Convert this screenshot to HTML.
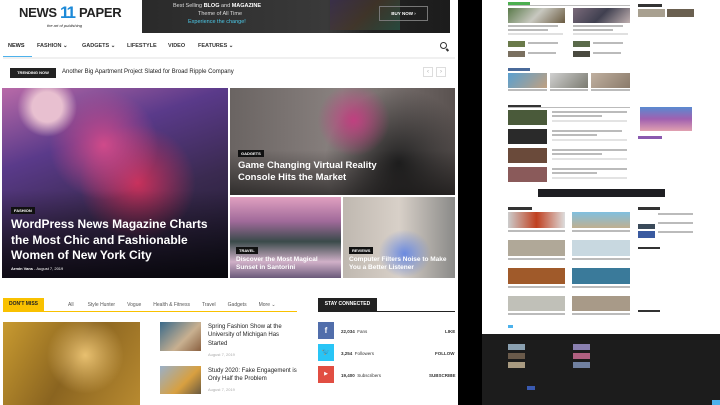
<!DOCTYPE html>
<html><head><meta charset="utf-8"><style>
*{margin:0;padding:0;box-sizing:border-box}
body{width:720px;height:405px;overflow:hidden;background:#000;font-family:"Liberation Sans",sans-serif;position:relative}
.a{position:absolute}
.t{color:#222;white-space:nowrap}
.tag{position:absolute;background:#222;color:#fff;font-size:4px;font-weight:bold;padding:1px 3px}
.ht{position:absolute;color:#fff;font-weight:bold;line-height:1.3}
.g{position:absolute;background:#ccc}
.l{position:absolute;height:2px;background:#bbb}
</style></head><body>
<div class="a" style="left:0;top:0;width:458px;height:405px;background:#fff"></div>
<!-- logo -->
<div class="a t" style="left:19px;top:5px;font-size:13px;font-weight:900;letter-spacing:-0.3px">NEWS</div>
<div class="a" style="left:60px;top:3px;font-size:17px;font-weight:900;color:#1d8ad8;letter-spacing:-2px">11</div>
<div class="a t" style="left:79px;top:5px;font-size:13px;font-weight:900;letter-spacing:-0.3px">PAPER</div>
<div class="a t" style="left:47px;top:23px;font-size:4px;font-style:italic">the art of publishing</div>
<!-- banner -->
<div class="a" style="left:142px;top:0;width:308px;height:33px;background:linear-gradient(90deg,#2a2a2a,#3a3a3a 60%,#222 75%,#1c1c1c)"></div>
<div class="a" style="left:330px;top:0;width:70px;height:30px;background:linear-gradient(135deg,#3a2c50,#4a3a2a 50%,#2a5a4a);opacity:.7"></div>
<div class="a" style="left:173px;top:3px;font-size:5.5px;color:#ddd">Best Selling <b style="color:#fff">BLOG</b> and <b style="color:#fff">MAGAZINE</b></div>
<div class="a" style="left:198px;top:11px;font-size:5.5px;color:#ddd">Theme of All Time</div>
<div class="a" style="left:188px;top:19px;font-size:5.5px;color:#4cc9e8">Experience the change!</div>
<div class="a" style="left:379px;top:6px;width:49px;height:15px;border:1px solid #777;color:#fff;font-size:4.5px;font-weight:bold;text-align:center;line-height:13px">BUY NOW ›</div>
<!-- nav -->
<div class="a t" style="left:8px;top:43px;font-size:5.5px;font-weight:bold;word-spacing:0">NEWS</div>
<div class="a t" style="left:37px;top:43px;font-size:5.5px;font-weight:bold;color:#333">FASHION ⌄</div>
<div class="a t" style="left:82px;top:43px;font-size:5.5px;font-weight:bold;color:#333">GADGETS ⌄</div>
<div class="a t" style="left:127px;top:43px;font-size:5.5px;font-weight:bold;color:#333">LIFESTYLE</div>
<div class="a t" style="left:168px;top:43px;font-size:5.5px;font-weight:bold;color:#333">VIDEO</div>
<div class="a t" style="left:198px;top:43px;font-size:5.5px;font-weight:bold;color:#333">FEATURES ⌄</div>
<div class="a" style="left:440px;top:42px;width:7px;height:7px;border:1.5px solid #333;border-radius:50%"></div>
<div class="a" style="left:446px;top:49px;width:3px;height:1.5px;background:#333;transform:rotate(45deg)"></div>
<div class="a" style="left:3px;top:56px;width:29px;height:1px;background:#4db2ec"></div>
<div class="a" style="left:3px;top:57px;width:452px;height:2px;background:#f0f0f0"></div>
<!-- trending -->
<div class="a" style="left:10px;top:68px;width:46px;height:10px;background:#222;color:#fff;font-size:4px;font-weight:bold;text-align:center;line-height:10px">TRENDING NOW</div>
<div class="a t" style="left:62px;top:69px;font-size:6px">Another Big Apartment Project Slated for Broad Ripple Company</div>
<div class="a" style="left:423px;top:67px;width:10px;height:10px;border:1px solid #ddd;color:#aaa;font-size:6px;text-align:center;line-height:8px">‹</div>
<div class="a" style="left:436px;top:67px;width:10px;height:10px;border:1px solid #ddd;color:#aaa;font-size:6px;text-align:center;line-height:8px">›</div>
<!-- hero -->
<div class="a" style="left:2px;top:88px;width:226px;height:190px;background:radial-gradient(circle at 20% 10%,#e8c0d0 0,#e8c0d0 6%,transparent 12%),radial-gradient(circle at 45% 30%,#d04a8a,transparent 30%),radial-gradient(circle at 60% 50%,#c8305a,transparent 35%),linear-gradient(160deg,#b86aa8,#5a3a8a 30%,#3a2a50 60%,#1a1828)"></div>
<div class="a" style="left:2px;top:190px;width:226px;height:88px;background:linear-gradient(180deg,transparent,rgba(0,0,0,.7))"></div>
<div class="tag" style="left:11px;top:207px;background:#111">FASHION</div>
<div class="ht" style="left:11px;top:217px;font-size:12px;width:210px">WordPress News Magazine Charts the Most Chic and Fashionable Women of New York City</div>
<div class="a" style="left:11px;top:266px;font-size:4px;color:#fff"><b>Armin Vans</b> - August 7, 2019</div>

<div class="a" style="left:230px;top:88px;width:225px;height:107px;background:radial-gradient(circle at 55% 30%,#c04080,transparent 25%),radial-gradient(circle at 75% 70%,#222,transparent 40%),linear-gradient(90deg,#6a6462,#8a8280 50%,#5a5250)"></div>
<div class="a" style="left:230px;top:150px;width:225px;height:45px;background:linear-gradient(180deg,transparent,rgba(0,0,0,.55))"></div>
<div class="tag" style="left:238px;top:150px;background:#111">GADGETS</div>
<div class="ht" style="left:238px;top:160px;font-size:9.5px">Game Changing Virtual Reality<br>Console Hits the Market</div>

<div class="a" style="left:230px;top:197px;width:111px;height:81px;background:linear-gradient(180deg,#e0a0c0,#a06a9a 30%,#3a4a4a 55%,#d0b0c8 80%,#6a5a7a)"></div>
<div class="tag" style="left:236px;top:247px;background:#111">TRAVEL</div>
<div class="ht" style="left:236px;top:256px;font-size:6.5px">Discover the Most Magical<br>Sunset in Santorini</div>

<div class="a" style="left:343px;top:197px;width:112px;height:81px;background:radial-gradient(ellipse at 55% 70%,#6a8ae0,transparent 30%),linear-gradient(90deg,#bfb8b0,#d8d0c8 50%,#8a8a88)"></div>
<div class="tag" style="left:349px;top:247px;background:#111">REVIEWS</div>
<div class="ht" style="left:349px;top:256px;font-size:6.5px">Computer Filters Noise to Make<br>You a Better Listener</div>
<!-- dont miss -->
<div class="a" style="left:3px;top:298px;width:41px;height:13px;background:#f9c100;font-size:5px;font-weight:bold;color:#222;text-align:center;line-height:13px">DON'T MISS</div>
<div class="a" style="left:3px;top:311px;width:294px;height:1px;background:#f9c100"></div>
<div class="a" style="left:68px;top:302px;font-size:5px;color:#555;word-spacing:0;white-space:nowrap">All<span style="margin-left:14px">Style Hunter</span><span style="margin-left:12px">Vogue</span><span style="margin-left:12px">Health &amp; Fitness</span><span style="margin-left:12px">Travel</span><span style="margin-left:12px">Gadgets</span><span style="margin-left:12px">More ⌄</span></div>
<div class="a" style="left:3px;top:322px;width:137px;height:83px;background:radial-gradient(circle at 60% 40%,#e8c070,transparent 40%),linear-gradient(120deg,#c89a30,#8a6420 50%,#b88a30)"></div>
<div class="a" style="left:160px;top:322px;width:41px;height:29px;background:linear-gradient(135deg,#3a6a8a,#c8b090 60%,#8a6040)"></div>
<div class="a" style="left:208px;top:323px;font-size:6px;line-height:1.4;color:#222">Spring Fashion Show at the<br>University of Michigan Has<br>Started</div>
<div class="a" style="left:208px;top:352px;font-size:4px;color:#aaa">August 7, 2019</div>
<div class="a" style="left:160px;top:366px;width:41px;height:28px;background:linear-gradient(135deg,#9ab0c8,#d8a040 60%,#6a5a40)"></div>
<div class="a" style="left:208px;top:367px;font-size:6px;line-height:1.4;color:#222">Study 2020: Fake Engagement is<br>Only Half the Problem</div>
<div class="a" style="left:208px;top:387px;font-size:4px;color:#aaa">August 7, 2019</div>
<!-- stay connected -->
<div class="a" style="left:318px;top:298px;width:59px;height:13px;background:#222;color:#fff;font-size:5px;font-weight:bold;text-align:center;line-height:13px">STAY CONNECTED</div>
<div class="a" style="left:318px;top:311px;width:137px;height:1px;background:#222"></div>
<div class="a" style="left:318px;top:322px;width:16px;height:17px;background:#516eab;color:#fff;font-size:8px;font-weight:bold;text-align:center;line-height:17px">f</div>
<div class="a" style="left:318px;top:344px;width:16px;height:17px;background:#29c5f6;color:#fff;font-size:7px;text-align:center;line-height:17px">🐦</div>
<div class="a" style="left:318px;top:366px;width:16px;height:17px;background:#e14e42;color:#fff;font-size:5px;text-align:center;line-height:17px">▶</div>
<div class="a" style="left:341px;top:329px;font-size:4.5px;color:#333"><b>22,034</b> &nbsp;Fans</div>
<div class="a" style="left:341px;top:351px;font-size:4.5px;color:#333"><b>3,254</b> &nbsp;Followers</div>
<div class="a" style="left:341px;top:373px;font-size:4.5px;color:#333"><b>19,400</b> &nbsp;Subscribers</div>
<div class="a" style="left:445px;top:329px;font-size:4.5px;font-weight:bold;color:#333">LIKE</div>
<div class="a" style="left:435px;top:351px;font-size:4.5px;font-weight:bold;color:#333">FOLLOW</div>
<div class="a" style="left:429px;top:373px;font-size:4.5px;font-weight:bold;color:#333">SUBSCRIBE</div>

<!-- right panel -->
<div class="a" style="left:482px;top:0;width:238px;height:334px;background:#fff"></div>
<div class="a" style="left:482px;top:334px;width:238px;height:71px;background:#1c1c1c"></div>
<div class="a" style="left:508px;top:2px;width:22px;height:3px;background:#4caf50"></div>
<div class="l" style="left:508px;top:5px;width:122px;height:1px"></div>
<div class="a" style="left:508px;top:8px;width:57px;height:15px;background:linear-gradient(135deg,#5a7a4a,#c8c8c0,#6a5a40)"></div>
<div class="a" style="left:573px;top:8px;width:57px;height:15px;background:linear-gradient(135deg,#7a6a7a,#404050,#c0b0b0)"></div>
<div class="l" style="left:508px;top:25px;width:50px"></div><div class="l" style="left:573px;top:25px;width:50px"></div>
<div class="l" style="left:508px;top:29px;width:40px"></div><div class="l" style="left:573px;top:29px;width:40px"></div>
<div class="l" style="left:508px;top:33px;width:55px;background:#e0e0e0"></div><div class="l" style="left:573px;top:33px;width:55px;background:#e0e0e0"></div>
<div class="a" style="left:508px;top:41px;width:17px;height:6px;background:#6a7a4a"></div>
<div class="a" style="left:573px;top:41px;width:17px;height:6px;background:#5a6a4a"></div>
<div class="a" style="left:508px;top:51px;width:17px;height:6px;background:#7a7060"></div>
<div class="a" style="left:573px;top:51px;width:17px;height:6px;background:#4a4a40"></div>
<div class="l" style="left:528px;top:42px;width:30px"></div><div class="l" style="left:593px;top:42px;width:30px"></div>
<div class="l" style="left:528px;top:52px;width:28px"></div><div class="l" style="left:593px;top:52px;width:28px"></div>
<div class="a" style="left:638px;top:4px;width:24px;height:3px;background:#333"></div>
<div class="a" style="left:638px;top:9px;width:27px;height:8px;background:#a8a090"></div>
<div class="a" style="left:667px;top:9px;width:27px;height:8px;background:#6a6050"></div>
<div class="a" style="left:508px;top:68px;width:22px;height:3px;background:#4a6a9a"></div>
<div class="a" style="left:508px;top:73px;width:39px;height:15px;background:linear-gradient(135deg,#5aa0d0,#c0a080)"></div>
<div class="a" style="left:550px;top:73px;width:38px;height:15px;background:linear-gradient(135deg,#d0d0d0,#7a7a70)"></div>
<div class="a" style="left:591px;top:73px;width:39px;height:15px;background:linear-gradient(135deg,#c0b0a0,#8a7a6a)"></div>
<div class="l" style="left:508px;top:89px;width:39px"></div><div class="l" style="left:550px;top:89px;width:38px"></div><div class="l" style="left:591px;top:89px;width:39px"></div>
<div class="a" style="left:508px;top:105px;width:33px;height:3px;background:#333"></div>
<div class="l" style="left:508px;top:107px;width:122px;height:1px"></div>
<div class="a" style="left:508px;top:110px;width:39px;height:15px;background:#4a5a3a"></div>
<div class="a" style="left:508px;top:129px;width:39px;height:15px;background:#2a2a2a"></div>
<div class="a" style="left:508px;top:148px;width:39px;height:15px;background:#6a4a3a"></div>
<div class="a" style="left:508px;top:167px;width:39px;height:15px;background:#8a5a5a"></div>
<div class="l" style="left:552px;top:111px;width:75px"></div><div class="l" style="left:552px;top:115px;width:50px"></div><div class="l" style="left:552px;top:120px;width:75px;background:#e3e3e3"></div>
<div class="l" style="left:552px;top:130px;width:70px"></div><div class="l" style="left:552px;top:134px;width:45px"></div><div class="l" style="left:552px;top:139px;width:75px;background:#e3e3e3"></div>
<div class="l" style="left:552px;top:149px;width:75px"></div><div class="l" style="left:552px;top:153px;width:50px"></div><div class="l" style="left:552px;top:158px;width:75px;background:#e3e3e3"></div>
<div class="l" style="left:552px;top:168px;width:75px"></div><div class="l" style="left:552px;top:172px;width:45px"></div><div class="l" style="left:552px;top:177px;width:75px;background:#e3e3e3"></div>
<div class="a" style="left:640px;top:107px;width:52px;height:24px;background:linear-gradient(180deg,#5a8ad0,#a060b0 50%,#e0a0b0)"></div>
<div class="a" style="left:638px;top:136px;width:24px;height:3px;background:#8a5ab0"></div>
<div class="a" style="left:538px;top:189px;width:127px;height:8px;background:#1e1e22"></div>
<div class="a" style="left:508px;top:207px;width:24px;height:3px;background:#333"></div>
<div class="a" style="left:508px;top:212px;width:57px;height:16px;background:linear-gradient(90deg,#ccc,#c04020 50%,#ddd)"></div>
<div class="a" style="left:572px;top:212px;width:58px;height:16px;background:linear-gradient(180deg,#80c0e0,#c0b090)"></div>
<div class="a" style="left:508px;top:240px;width:57px;height:16px;background:#b0a898"></div>
<div class="a" style="left:572px;top:240px;width:58px;height:16px;background:#c8d8e0"></div>
<div class="a" style="left:508px;top:268px;width:57px;height:16px;background:#a05a2a"></div>
<div class="a" style="left:572px;top:268px;width:58px;height:16px;background:#3a7a9a"></div>
<div class="a" style="left:508px;top:296px;width:57px;height:15px;background:#c0c0b8"></div>
<div class="a" style="left:572px;top:296px;width:58px;height:15px;background:#a89a88"></div>
<div class="l" style="left:508px;top:230px;width:57px"></div><div class="l" style="left:572px;top:230px;width:58px"></div>
<div class="l" style="left:508px;top:258px;width:57px"></div><div class="l" style="left:572px;top:258px;width:58px"></div>
<div class="l" style="left:508px;top:286px;width:57px"></div><div class="l" style="left:572px;top:286px;width:58px"></div>
<div class="l" style="left:508px;top:313px;width:57px"></div><div class="l" style="left:572px;top:313px;width:58px"></div>
<div class="a" style="left:508px;top:325px;width:5px;height:3px;background:#4db2ec"></div>
<div class="a" style="left:638px;top:207px;width:22px;height:3px;background:#333"></div>
<div class="a" style="left:638px;top:224px;width:17px;height:5px;background:#3a4a5a"></div>
<div class="a" style="left:638px;top:231px;width:17px;height:7px;background:#3a5aa0"></div>
<div class="l" style="left:658px;top:213px;width:35px"></div><div class="l" style="left:658px;top:222px;width:35px"></div><div class="l" style="left:658px;top:231px;width:35px"></div>
<div class="a" style="left:638px;top:247px;width:22px;height:2px;background:#333"></div>
<div class="a" style="left:638px;top:310px;width:22px;height:2px;background:#333"></div>
<!-- footer bits -->
<div class="a" style="left:508px;top:344px;width:17px;height:6px;background:#8aa0b0"></div>
<div class="a" style="left:508px;top:353px;width:17px;height:6px;background:#6a5a4a"></div>
<div class="a" style="left:508px;top:362px;width:17px;height:6px;background:#a89a80"></div>
<div class="a" style="left:573px;top:344px;width:17px;height:6px;background:#8a80b0"></div>
<div class="a" style="left:573px;top:353px;width:17px;height:6px;background:#b06080"></div>
<div class="a" style="left:573px;top:362px;width:17px;height:6px;background:#7080a0"></div>
<div class="a" style="left:527px;top:386px;width:8px;height:4px;background:#3a5ab0"></div>
<div class="a" style="left:712px;top:400px;width:8px;height:5px;background:#4db2ec"></div>
</body></html>
